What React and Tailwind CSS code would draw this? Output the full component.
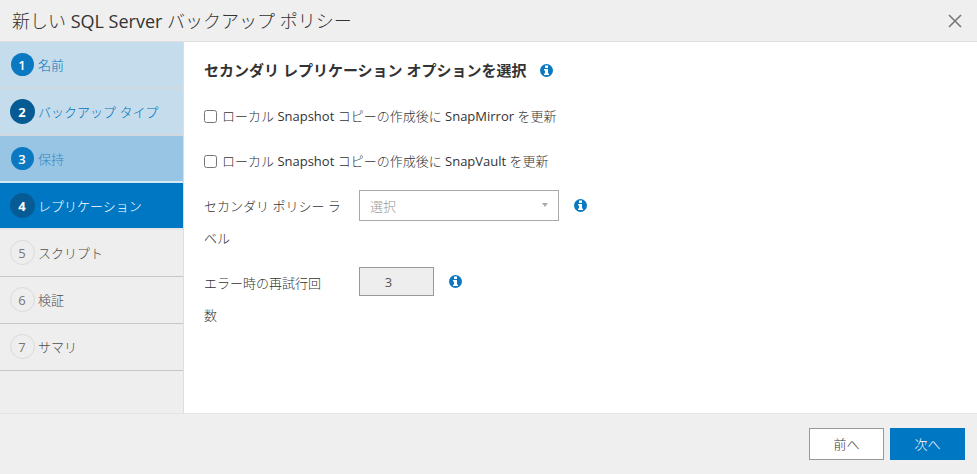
import React from 'react';

const steps = [
  { id: 1, label: '名前', state: 'done' },
  { id: 2, label: 'バックアップ タイプ', state: 'doneStrong' },
  { id: 3, label: '保持', state: 'previous' },
  { id: 4, label: 'レプリケーション', state: 'active' },
  { id: 5, label: 'スクリプト', state: 'todo' },
  { id: 6, label: '検証', state: 'todo' },
  { id: 7, label: 'サマリ', state: 'todo' },
];

const rowStyles = {
  done: 'border-b-2 bg-[#c5dcec] text-[#0073bb] border-[#d2d9df]',
  doneStrong: 'border-b-2 bg-[#c5dcec] text-[#0073bb] border-[#d2d9df]',
  previous: 'border-b-2 bg-[#97c5e3] text-[#3388c4] border-[#d5e9f4]',
  active: 'border-b-2 bg-[#0077c3] text-white border-[#e6e6e6]',
  todo: 'border-b pb-px bg-[#eeeeee] text-[#4d4d4d] border-[#c6c6c6]',
};

const badgeStyles = {
  done: 'size-[23px] bg-[#0a79c1] text-white font-semibold',
  doneStrong: 'size-[25px] bg-[#065b94] text-white font-bold',
  previous: 'size-[23px] bg-[#0a79c1] text-white font-semibold',
  active: 'size-[25px] bg-[#065b94] text-white font-bold',
  todo: 'size-[25px] border border-[#dadada] text-[#777777]',
};

const InfoIcon = () => (
  <svg viewBox="0 0 13 13" className="size-[13px] shrink-0" aria-hidden="true">
    <circle cx="6.5" cy="6.5" r="6.5" fill="#0a79c1" />
    <path d="M5 1.5h3v2.5H5zM4 5h4v4.5h1V11H4V9.5h1v-3H4z" fill="#fff" />
  </svg>
);

const Step = ({ step }) => (
  <li className={`flex h-[47px] ${rowStyles[step.state]}`}>
    <button type="button" className="flex flex-1 items-center gap-1 pl-[10px] text-left">
      <span className="flex w-6 shrink-0 justify-center">
        <span className={`flex shrink-0 items-center justify-center rounded-full ${badgeStyles[step.state]}`}>
          {step.id}
        </span>
      </span>
      <span>{step.label}</span>
    </button>
  </li>
);

const App = () => {
  return (
    <div className="flex min-h-screen flex-col bg-[#efefef] font-['Open_Sans','Noto_Sans_CJK_JP_Light','Noto_Sans_CJK_JP',sans-serif] text-[13px] leading-5 text-[#333333]">
      <header className="flex h-[42px] items-center justify-between border-b border-[#e0e0e0] pl-3 pr-[15px]">
        <h1 className="text-[18px] leading-6">新しい SQL Server バックアップ ポリシー</h1>
        <button type="button" aria-label="閉じる">
          <svg viewBox="0 0 14 14" className="size-[14px]" fill="none" stroke="#777777" strokeWidth="1.6">
            <path d="M1 1l12 12M13 1L1 13" />
          </svg>
        </button>
      </header>

      <div className="flex flex-1">
        {/* Wizard steps */}
        <nav className="w-[184px] shrink-0 border-r border-[#dddddd] bg-[#eeeeee]">
          <ol>
            {steps.map((step) => (
              <Step key={step.id} step={step} />
            ))}
          </ol>
        </nav>

        {/* Replication options */}
        <main className="flex-1 bg-white px-5 pt-4">
          <div className="flex items-center gap-[13px]">
            <h2 className="font-['Open_Sans','Noto_Sans_CJK_JP',sans-serif] text-[15px] leading-6 font-bold">
              セカンダリ レプリケーション オプションを選択
            </h2>
            <InfoIcon />
          </div>

          <div className="mt-6 flex flex-col gap-[25px]">
            <label className="flex items-center gap-[5px]">
              <input type="checkbox" className="size-[13px]" />
              ローカル Snapshot コピーの作成後に SnapMirror を更新
            </label>
            <label className="flex items-center gap-[5px]">
              <input type="checkbox" className="size-[13px]" />
              ローカル Snapshot コピーの作成後に SnapVault を更新
            </label>
          </div>

          <div className="mt-[19px] flex items-start">
            <label htmlFor="policy-label" className="w-[155px] shrink-0 leading-8">
              セカンダリ ポリシー ラ<br />ベル
            </label>
            <div className="flex items-center gap-[15px]">
              <div className="relative">
                <select
                  id="policy-label"
                  disabled
                  className="h-[31px] w-[200px] appearance-none border border-[#aaaaaa] bg-white px-[10px] text-[#999999] opacity-100"
                >
                  <option>選択</option>
                </select>
                <svg viewBox="0 0 6 4" className="pointer-events-none absolute top-[13px] right-[11px] h-1 w-[6px]" fill="#aaaaaa">
                  <path d="M0 0h6L3 4z" />
                </svg>
              </div>
              <InfoIcon />
            </div>
          </div>

          <div className="mt-[13px] flex items-start">
            <label htmlFor="retry-count" className="w-[155px] shrink-0 leading-8">
              エラー時の再試行回<br />数
            </label>
            <div className="flex items-center gap-[15px]">
              <input
                id="retry-count"
                type="text"
                defaultValue="3"
                disabled
                className="h-[29px] w-[75px] border border-[#999999] bg-[#eeeeee] pr-4 text-center text-[#555555]"
              />
              <InfoIcon />
            </div>
          </div>
        </main>
      </div>

      <footer className="flex h-[61px] items-center justify-end gap-[6px] border-t border-[#e4e4e4] px-3">
        <button type="button" className="h-8 w-[75px] border border-[#999999] bg-white">
          前へ
        </button>
        <button type="button" className="h-8 w-[75px] bg-[#0077c3] text-white">
          次へ
        </button>
      </footer>
    </div>
  );
};

export default App;
